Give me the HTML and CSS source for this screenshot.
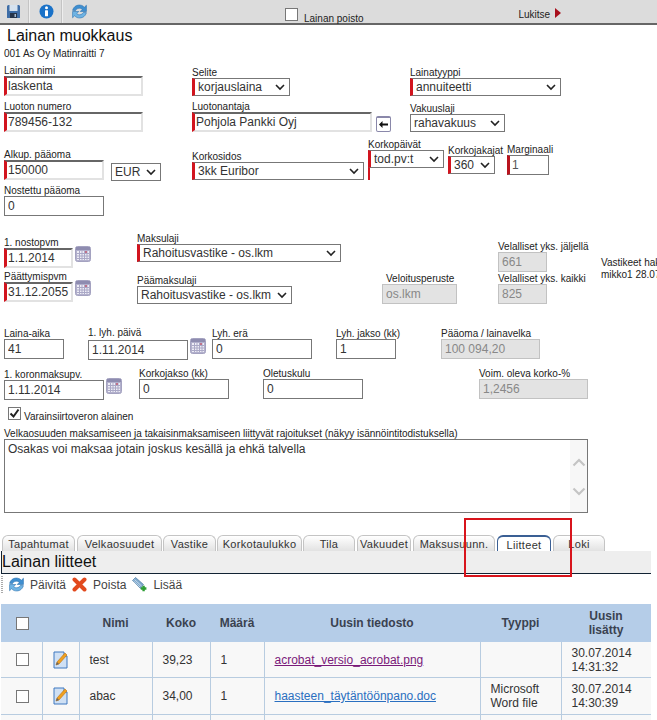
FILE: index.html
```html
<!DOCTYPE html>
<html lang="fi">
<head>
    <meta charset="UTF-8">
    <meta name="viewport" content="width=device-width, initial-scale=1.0">
    <title>Lainan muokkaus</title>
    <link rel="stylesheet" href="styles.css">
</head>
<body>
    <svg class="icon-defs" aria-hidden="true">
        <symbol id="i-cal" viewBox="0 0 16 16">
            <rect x="0.5" y="0.5" width="15" height="15" rx="2" fill="#b2b0cc" stroke="#a4a2c0"/>
            <rect x="1" y="1" width="14" height="3" fill="#8e8cb0"/>
            <path d="M2 5h12v9H2z" fill="#eeedf6"/>
            <path d="M2 7.500h12M2 10h12M2 12.500h12M4.500 5v9M7 5v9M9.500 5v9M12 5v9" stroke="#aaa8c6" stroke-width="1"/>
            <rect x="10" y="5" width="2" height="2" fill="#c07088"/>
        </symbol>
        <symbol id="i-refresh" viewBox="1.500 1.500 13 13">
            <path d="M2 7C3 3.500 6 2 9 2.500c1.500.2 2.500 1 3.200 1.800L14 2.600V8H8.600l1.800-1.800C9.600 5.300 8.500 5 7.500 5.200 6 5.500 5 6.200 4.500 7.300z" fill="#3f8fd0" stroke="#2a6fae" stroke-width=".5"/>
            <path d="M14 9c-1 3.500-4 5-7 4.500-1.500-.2-2.500-1-3.200-1.800L2 13.400V8h5.400L5.600 9.800C6.400 10.700 7.500 11 8.500 10.800 10 10.500 11 9.800 11.500 8.700z" fill="#6fb4e4" stroke="#2a6fae" stroke-width=".5"/>
        </symbol>
        <symbol id="i-edit" viewBox="0 0 16 18">
            <path d="M1 1h10v4l3 0v12H1z" fill="#cfe0f4" stroke="#3f78c0"/>
            <path d="M3 14l1-3 8-9 2 2-8 9z" fill="#f0a020" stroke="#b87010" stroke-width=".6"/>
            <path d="M3 14l1-3 2 2z" fill="#666"/>
        </symbol>
    </svg>

    <div class="topbar">
        <svg class="tool-icon tool-save" viewBox="0 0 15 15">
            <path d="M1 2.500A1.500 1.500 0 0 1 2.500 1H13l1 1v11.500a.5.500 0 0 1-.5.500h-12a.5.500 0 0 1-.5-.5z" fill="#3e6da6"/>
            <rect x="3.500" y="1" width="8" height="6" fill="#d6e2ee"/>
            <rect x="4" y="9" width="7" height="5" fill="#26354a"/>
            <rect x="8.500" y="10" width="1.500" height="3" fill="#a8bcd0"/>
        </svg>
        <span class="tool-sep"></span>
        <svg class="tool-icon tool-info" viewBox="0 0 15 15">
            <circle cx="7.500" cy="7.500" r="7" fill="#1a72c8"/>
            <circle cx="7.500" cy="3.800" r="1.500" fill="#fff"/>
            <rect x="6" y="6.200" width="3" height="6" rx=".5" fill="#fff"/>
        </svg>
        <span class="tool-sep"></span>
        <svg class="tool-icon tool-refresh"><use href="#i-refresh"/></svg>
        <label class="top-check"><input type="checkbox" class="check"><span>Lainan poisto</span></label>
        <span class="lock">Lukitse</span>
        <span class="lock-arrow"></span>
    </div>

    <h1 class="page-title">Lainan muokkaus</h1>
    <div class="company">001 As Oy Matinraitti 7</div>

    <form class="loan-form">
        <div class="row r1">
            <div class="field f-nimi"><label>Lainan nimi</label><input class="inp req" value="laskenta"></div>
            <div class="field f-selite"><label>Selite</label><select class="sel req"><option>korjauslaina</option></select></div>
            <div class="field f-tyyppi"><label>Lainatyyppi</label><select class="sel req"><option>annuiteetti</option></select></div>
        </div>
        <div class="row r2">
            <div class="field f-numero"><label>Luoton numero</label><input class="inp req" value="789456-132"></div>
            <div class="field f-antaja"><label>Luotonantaja</label><input class="inp req" value="Pohjola Pankki Oyj"></div>
            <button type="button" class="back-btn"><svg viewBox="0 0 9 7"><path d="M0 3.500L3.500 0v2.500H9v2H3.500V7z" fill="#111"/></svg></button>
            <div class="field f-vakuus"><label>Vakuuslaji</label><select class="sel"><option>rahavakuus</option></select></div>
        </div>
        <div class="row r3">
            <div class="field f-alkup"><label>Alkup. pääoma</label><input class="inp req" value="150000"></div>
            <div class="field f-eur"><select class="sel"><option>EUR</option></select></div>
            <div class="field f-sidos"><label>Korkosidos</label><select class="sel req"><option>3kk Euribor</option></select></div>
            <div class="field f-paivat"><label>Korkopäivät</label><select class="sel req"><option>tod.pv:t</option></select><div class="red-tail"></div></div>
            <div class="field f-jakajat"><label>Korkojakajat</label><select class="sel req"><option>360</option></select></div>
            <div class="field f-marg"><label>Marginaali</label><input class="inp plain-req" value="1"></div>
        </div>
        <div class="row r4">
            <div class="field f-nostettu"><label>Nostettu pääoma</label><input class="inp plain" value="0"></div>
        </div>
        <div class="row r5">
            <div class="field f-nosto"><label>1. nostopvm</label><input class="inp req" value="1.1.2014"></div>
            <svg class="cal cal-nosto"><use href="#i-cal"/></svg>
            <div class="field f-maksu"><label>Maksulaji</label><select class="sel req"><option>Rahoitusvastike - os.lkm</option></select></div>
            <div class="field f-jaljella"><label>Velalliset yks. jäljellä</label><input class="inp off" value="661" disabled></div>
            <div class="note">Vastikeet hak<br>mikko1 28.07</div>
        </div>
        <div class="row r6">
            <div class="field f-paatty"><label>Päättymispvm</label><input class="inp req" value="31.12.2055"></div>
            <svg class="cal cal-paatty"><use href="#i-cal"/></svg>
            <div class="field f-paamaksu"><label>Päämaksulaji</label><select class="sel"><option>Rahoitusvastike - os.lkm</option></select></div>
            <div class="field f-veloitus"><label>Veloitusperuste</label><input class="inp off" value="os.lkm" disabled></div>
            <div class="field f-kaikki"><label>Velalliset yks. kaikki</label><input class="inp off" value="825" disabled></div>
        </div>
        <div class="row r7">
            <div class="field f-aika"><label>Laina-aika</label><input class="inp plain" value="41"></div>
            <div class="field f-lyhpv"><label>1. lyh. päivä</label><input class="inp plain" value="1.11.2014"></div>
            <svg class="cal cal-lyh"><use href="#i-cal"/></svg>
            <div class="field f-era"><label>Lyh. erä</label><input class="inp plain" value="0"></div>
            <div class="field f-jakso"><label>Lyh. jakso (kk)</label><input class="inp plain" value="1"></div>
            <div class="field f-velka"><label>Pääoma / lainavelka</label><input class="inp off" value="100 094,20" disabled></div>
        </div>
        <div class="row r8">
            <div class="field f-koron"><label>1. koronmaksupv.</label><input class="inp plain" value="1.11.2014"></div>
            <svg class="cal cal-koron"><use href="#i-cal"/></svg>
            <div class="field f-korkojakso"><label>Korkojakso (kk)</label><input class="inp plain" value="0"></div>
            <div class="field f-kulu"><label>Oletuskulu</label><input class="inp plain" value="0"></div>
            <div class="field f-voim"><label>Voim. oleva korko-%</label><input class="inp off" value="1,2456" disabled></div>
        </div>
        <label class="transfer-tax"><input type="checkbox" class="check" checked><span>Varainsiirtoveron alainen</span></label>
        <div class="field f-rajoitus">
            <label>Velkaosuuden maksamiseen ja takaisinmaksamiseen liittyvät rajoitukset (näkyy isännöintitodistuksella)</label>
            <div class="text-box">
                <textarea class="text-area">Osakas voi maksaa jotain joskus kesällä ja ehkä talvella</textarea>
                <div class="fake-scroll">
                    <svg viewBox="0 0 14 9"><path d="M1.500 7.500L7 2l5.500 5.500" fill="none" stroke="#c4c4c4" stroke-width="2.200"/></svg>
                    <svg viewBox="0 0 14 9"><path d="M1.500 1.500L7 7l5.500-5.500" fill="none" stroke="#c4c4c4" stroke-width="2.200"/></svg>
                </div>
            </div>
        </div>
    </form>

    <div class="tabs">
        <a class="tab t1">Tapahtumat</a>
        <a class="tab t2">Velkaosuudet</a>
        <a class="tab t3">Vastike</a>
        <a class="tab t4">Korkotaulukko</a>
        <a class="tab t5">Tila</a>
        <a class="tab t6">Vakuudet</a>
        <a class="tab t7">Maksusuunn.</a>
        <a class="tab t8 active">Liitteet</a>
        <a class="tab t9">Loki</a>
    </div>
    <div class="panel-head">Lainan liitteet</div>
    <div class="actions">
        <span class="grip"></span>
        <svg class="act-icon act-refresh"><use href="#i-refresh"/></svg>
        <span class="act-label">Päivitä</span>
        <svg class="act-icon act-del" viewBox="0 0 15 15"><path d="M2.500 2.500l10 10M12.500 2.500l-10 10" stroke="#e24a1e" stroke-width="4" stroke-linecap="round"/></svg>
        <span class="act-label">Poista</span>
        <svg class="act-icon act-add" viewBox="0 0 15 15">
            <path d="M0.500 3.500L3.500 0.500l8 7-3 4z" fill="#7fa8cc" stroke="#4f7ca4" stroke-width=".7"/>
            <path d="M2.500 2.500l7 6.500M1.500 4l6.500 6" stroke="#d4e4f2" stroke-width=".8"/>
            <path d="M8.800 11.500h5.600M11.600 8.700v5.600" stroke="#2e9e34" stroke-width="2.400"/>
        </svg>
        <span class="act-label">Lisää</span>
    </div>

    <table class="files">
        <colgroup>
            <col class="c-check"><col class="c-edit"><col class="c-nimi"><col class="c-koko"><col class="c-maara"><col class="c-file"><col class="c-type"><col class="c-date">
        </colgroup>
        <thead>
            <tr>
                <th class="head-check"><input type="checkbox" class="check"></th><th></th><th>Nimi</th><th>Koko</th><th>Määrä</th><th>Uusin tiedosto</th><th>Tyyppi</th><th>Uusin<br>lisätty</th>
            </tr>
        </thead>
        <tbody>
            <tr class="row-a">
                <td class="mid"><input type="checkbox" class="check"></td>
                <td class="mid"><svg class="edit-icon"><use href="#i-edit"/></svg></td>
                <td>test</td><td>39,23</td><td>1</td>
                <td><a class="visited" href="#">acrobat_versio_acrobat.png</a></td>
                <td></td>
                <td>30.07.2014<br>14:31:32</td>
            </tr>
            <tr class="row-b">
                <td class="mid"><input type="checkbox" class="check"></td>
                <td class="mid"><svg class="edit-icon"><use href="#i-edit"/></svg></td>
                <td>abac</td><td>34,00</td><td>1</td>
                <td><a class="link" href="#">haasteen_täytäntöönpano.doc</a></td>
                <td>Microsoft<br>Word file</td>
                <td>30.07.2014<br>14:30:39</td>
            </tr>
            <tr class="row-c"><td></td><td></td><td></td><td></td><td></td><td></td><td></td><td></td></tr>
        </tbody>
    </table>

    <div class="marker"></div>
</body>
</html>
```

FILE: styles.css
```css
html, body {
    margin: 0;
    padding: 0;
    height: 720px;
    overflow: hidden;
    background-color: white;
}
body {
    position: relative;
    font-family: "Liberation Sans", Arial, sans-serif;
    font-size: 12px;
    color: #222;
}
.icon-defs {
    display: block;
    width: 0;
    height: 0;
}

/* top toolbar */
.topbar {
    display: flex;
    height: 23px;
    background-color: #dcdcdc;
    border-bottom: 2px solid #666;
    box-sizing: content-box;
}
.tool-icon {
    width: 15px;
    height: 15px;
    margin-top: 4px;
    flex: none;
}
.tool-save { margin-left: 6px; }
.tool-info { margin-left: 9px; }
.tool-refresh { margin-left: 9px; width: 15px; }
.tool-sep {
    width: 1px;
    height: 23px;
    margin-left: 7px;
    background-color: #c4c4c4;
    border-right: 1px solid #eee;
}
.top-check {
    display: flex;
    margin-left: 198px;
    margin-top: 8px;
    font-size: 10px;
}
.top-check span {
    margin-left: 6px;
    margin-top: 4px;
    line-height: 13px;
}
.lock {
    margin-left: 155px;
    margin-top: 8px;
    font-size: 10px;
    line-height: 13px;
}
.lock-arrow {
    width: 0;
    height: 0;
    margin-left: 5px;
    margin-top: 8px;
    border-left: 6px solid #a80f1c;
    border-top: 5px solid transparent;
    border-bottom: 5px solid transparent;
}

.page-title {
    margin: 1px 0 0 7px;
    font-size: 16px;
    font-weight: normal;
    line-height: 20px;
    color: #111;
}
.company {
    margin: 2px 0 0 4px;
    font-size: 10px;
    line-height: 12px;
    height: 12px;
}

/* form rows */
.loan-form {
    padding-top: 5px;
}
.row {
    display: flex;
    align-items: flex-start;
}
.r1 { height: 36px; margin-top: 0; }
.r2 { height: 38px; }
.r3 { height: 46px; }
.r4 { height: 48px; }
.r5 { height: 38px; }
.r6 { height: 57px; }
.r7 { height: 40px; }
.r8 { height: 39px; }

.field {
    flex: none;
    display: flex;
    flex-direction: column;
}
.field label {
    display: block;
    height: 11px;
    font-size: 10px;
    line-height: 11px;
    white-space: nowrap;
    color: #222;
}
.inp, .sel {
    display: block;
    width: 100%;
    box-sizing: border-box;
    margin: 0;
    font-family: "Liberation Sans", Arial, sans-serif;
    font-size: 12px;
    color: #333;
    background-color: white;
    border-radius: 0;
    outline: none;
}
.inp {
    height: 20px;
    padding: 0 0 0 3px;
}
.inp.req {
    border-style: solid;
    border-width: 2px 2px 2px 3px;
    border-color: #666 #e2e2e2 #e2e2e2 #d2141e;
    padding-left: 1px;
}
.inp.plain {
    border: 1px solid #777;
}
.inp.plain-req {
    border: 1px solid #777;
    border-left: 3px solid #b8141e;
    padding-left: 2px;
    color: #555;
}
.inp.off {
    border: 1px solid #c2c2c2;
    background-color: #e3e3e3;
    color: #888;
}
.sel {
    height: 18px;
    padding: 0 0 0 3px;
    border: 1px solid #777;
    appearance: none;
    background-image: url("data:image/svg+xml,%3Csvg xmlns='http://www.w3.org/2000/svg' width='10' height='7'%3E%3Cpath d='M1 1l4 4 4-4' fill='none' stroke='%23222' stroke-width='1.600'/%3E%3C/svg%3E");
    background-repeat: no-repeat;
    background-position: right 4px center;
}
.sel.req {
    border-left: 3px solid #d2141e;
}

.f-nimi { margin-left: 4px; width: 139px; }
.f-selite { margin-left: 49px; width: 98px; margin-top: 2px; }
.f-tyyppi { margin-left: 120px; width: 151px; margin-top: 2px; }

.f-numero { margin-left: 4px; width: 139px; }
.f-antaja { margin-left: 49px; width: 180px; }
.back-btn {
    flex: none;
    display: flex;
    align-items: center;
    justify-content: center;
    width: 15px;
    height: 16px;
    margin: 15px 0 0 4px;
    padding: 0;
    background-color: #fff;
    border: 1px solid #8a88aa;
    border-top-width: 2px;
    border-radius: 2px;
}
.back-btn svg {
    width: 9px;
    height: 7px;
}
.f-vakuus { margin-left: 19px; width: 95px; margin-top: 2px; }

.f-alkup { margin-left: 4px; width: 100px; margin-top: 10px; }
.f-eur { margin-left: 7px; width: 50px; margin-top: 24px; }
.f-sidos { margin-left: 31px; width: 172px; margin-top: 12px; }
.f-paivat { margin-left: 4px; width: 76px; }
.red-tail {
    width: 2px;
    height: 12px;
    background-color: #d2141e;
}
.f-jakajat { margin-left: 4px; width: 47px; margin-top: 6px; }
.f-marg { margin-left: 12px; width: 42px; margin-top: 5px; }

.f-nostettu { margin-left: 4px; width: 100px; }

.f-nosto { margin-left: 4px; width: 69px; margin-top: 4px; }
.cal {
    flex: none;
    width: 16px;
    height: 16px;
    margin-left: 2px;
}
.cal-nosto { margin-top: 13px; }
.f-maksu { margin-left: 46px; width: 204px; }
.f-jaljella { margin-left: 157px; width: 49px; margin-top: 8px; }
.note {
    flex: none;
    margin-left: 54px;
    margin-top: 24px;
    font-size: 10px;
    line-height: 12px;
    white-space: nowrap;
}

.f-paatty { margin-left: 4px; width: 69px; }
.cal-paatty { margin-top: 9px; }
.f-paamaksu { margin-left: 46px; width: 155px; margin-top: 4px; }
.f-veloitus { margin-left: 90px; width: 75px; margin-top: 2px; }
.f-veloitus label { padding-left: 4px; }
.f-kaikki { margin-left: 41px; width: 49px; margin-top: 2px; }

.f-aika { margin-left: 4px; width: 60px; }
.f-lyhpv { margin-left: 24px; width: 100px; margin-top: 1px; }
.f-lyhpv label { margin-top: -2px; margin-bottom: 2px; }
.cal-lyh { margin-top: 10px; }
.f-era { margin-left: 6px; width: 100px; }
.f-jakso { margin-left: 24px; width: 60px; }
.f-velka { margin-left: 45px; width: 99px; }

.f-koron { margin-left: 4px; width: 100px; margin-top: 1px; }
.cal-koron { margin-top: 10px; }
.f-korkojakso { margin-left: 17px; width: 90px; }
.f-kulu { margin-left: 34px; width: 100px; }
.f-voim { margin-left: 116px; width: 109px; }

.check {
    display: block;
    width: 13px;
    height: 13px;
    margin: 0;
    flex: none;
    appearance: none;
    background-color: white;
    border: 1px solid #777;
}
.check:checked {
    background-image: url("data:image/svg+xml,%3Csvg xmlns='http://www.w3.org/2000/svg' width='11' height='11'%3E%3Cpath d='M1.500 5.500l3 3 5-7' fill='none' stroke='%23222' stroke-width='2'/%3E%3C/svg%3E");
    background-repeat: no-repeat;
    background-position: center;
}
.transfer-tax {
    display: flex;
    height: 21px;
    margin-left: 8px;
    font-size: 10px;
}
.transfer-tax span {
    margin-left: 3px;
    margin-top: 3px;
    line-height: 13px;
}

.f-rajoitus {
    margin-left: 4px;
    width: 584px;
}
.text-box {
    display: flex;
    height: 74px;
    box-sizing: border-box;
    border: 1px solid #777;
}
.text-area {
    flex: 1;
    margin: 0;
    padding: 2px 3px;
    border: none;
    outline: none;
    resize: none;
    font-family: "Liberation Sans", Arial, sans-serif;
    font-size: 12px;
    line-height: 15px;
    color: #333;
}
.fake-scroll {
    width: 17px;
    background-color: #f7f7f7;
    display: flex;
    flex-direction: column;
    align-items: center;
    padding-top: 18px;
    gap: 20px;
}
.fake-scroll svg {
    width: 14px;
    height: 9px;
}

/* tabs */
.tabs {
    display: flex;
    margin-top: 22px;
    padding-left: 2px;
    height: 16px;
}
.tab {
    box-sizing: border-box;
    height: 16px;
    text-align: center;
    font-size: 11px;
    line-height: 16px;
    letter-spacing: .3px;
    color: #333;
    background: linear-gradient(#fff, #e2e2e2);
    border: 1px solid #c4c4c4;
    border-bottom: none;
    border-radius: 6px 6px 0 0;
    overflow: hidden;
}
.t1 { width: 73px; margin-right: 2px; }
.t2 { width: 85px; margin-right: 1px; }
.t3 { width: 53px; margin-right: 1px; }
.t4 { width: 85px; margin-right: 1px; }
.t5 { width: 52px; margin-right: 2px; }
.t6 { width: 54px; margin-right: 2px; }
.t7 { width: 82px; margin-right: 2px; }
.t8 { width: 54px; margin-right: 2px; }
.t9 { width: 52px; }
.tab.active {
    background: white;
    border-color: #3a5f94;
    border-top-width: 2px;
    border-bottom: none;
    line-height: 16px;
}

.panel-head {
    box-sizing: border-box;
    margin-left: 1px;
    width: 650px;
    height: 23px;
    background-color: #eee;
    border-left: 1px solid #123;
    border-bottom: 1px solid #123;
    font-size: 16px;
    line-height: 22px;
    color: #111;
}

.actions {
    display: flex;
    align-items: center;
    height: 21px;
    color: #444;
}
.grip {
    width: 2px;
    height: 18px;
    margin-left: 1px;
    background: repeating-linear-gradient(#aaa 0 1px, #fff 1px 2px);
}
.act-icon {
    flex: none;
    width: 15px;
    height: 15px;
}
.act-refresh { margin-left: 6px; }
.act-del { margin-left: 6px; }
.act-add { margin-left: 6px; }
.act-label { margin-left: 6px; }

/* files table */
.files {
    margin: 9px 0 0 1px;
    width: 650px;
    table-layout: fixed;
    border-collapse: collapse;
    font-size: 12px;
    color: #333;
}
.c-check { width: 41px; }
.c-edit { width: 37px; }
.c-nimi { width: 73px; }
.c-koko { width: 58px; }
.c-maara { width: 54px; }
.c-file { width: 216px; }
.c-type { width: 81px; }
.c-date { width: 90px; }
.files th {
    height: 38px;
    padding: 0;
    background-color: #b5cde8;
    font-weight: bold;
    line-height: 14px;
    text-align: center;
    color: #3a4250;
}
.files th.head-check {
    padding-left: 2px;
}
.files th .check {
    margin: 0 auto;
}
.files td {
    padding: 0 0 0 10px;
    background-color: #f8f8f8;
    border-left: 1px solid #b8cce0;
    border-bottom: 1px solid #b8cce0;
    line-height: 14px;
    vertical-align: middle;
}
.files td:first-child {
    border-left: none;
}
.files td.mid {
    padding: 0;
}
.files td.mid:first-child {
    padding-left: 2px;
}
.files td .check {
    margin: 0 auto;
}
.row-a td { height: 35px; }
.row-b td { height: 36px; }
.row-c td { height: 36px; }
.edit-icon {
    display: block;
    width: 16px;
    height: 18px;
    margin: 0 auto;
}
.files a {
    text-decoration: underline;
}
.files a.visited { color: #7a1a7a; }
.files a.link { color: #2a6fc0; }

/* red highlight drawn over the screenshot */
.marker {
    position: absolute;
    left: 464px;
    top: 518px;
    width: 104px;
    height: 55px;
    border: 2px solid #d8141c;
}
```
